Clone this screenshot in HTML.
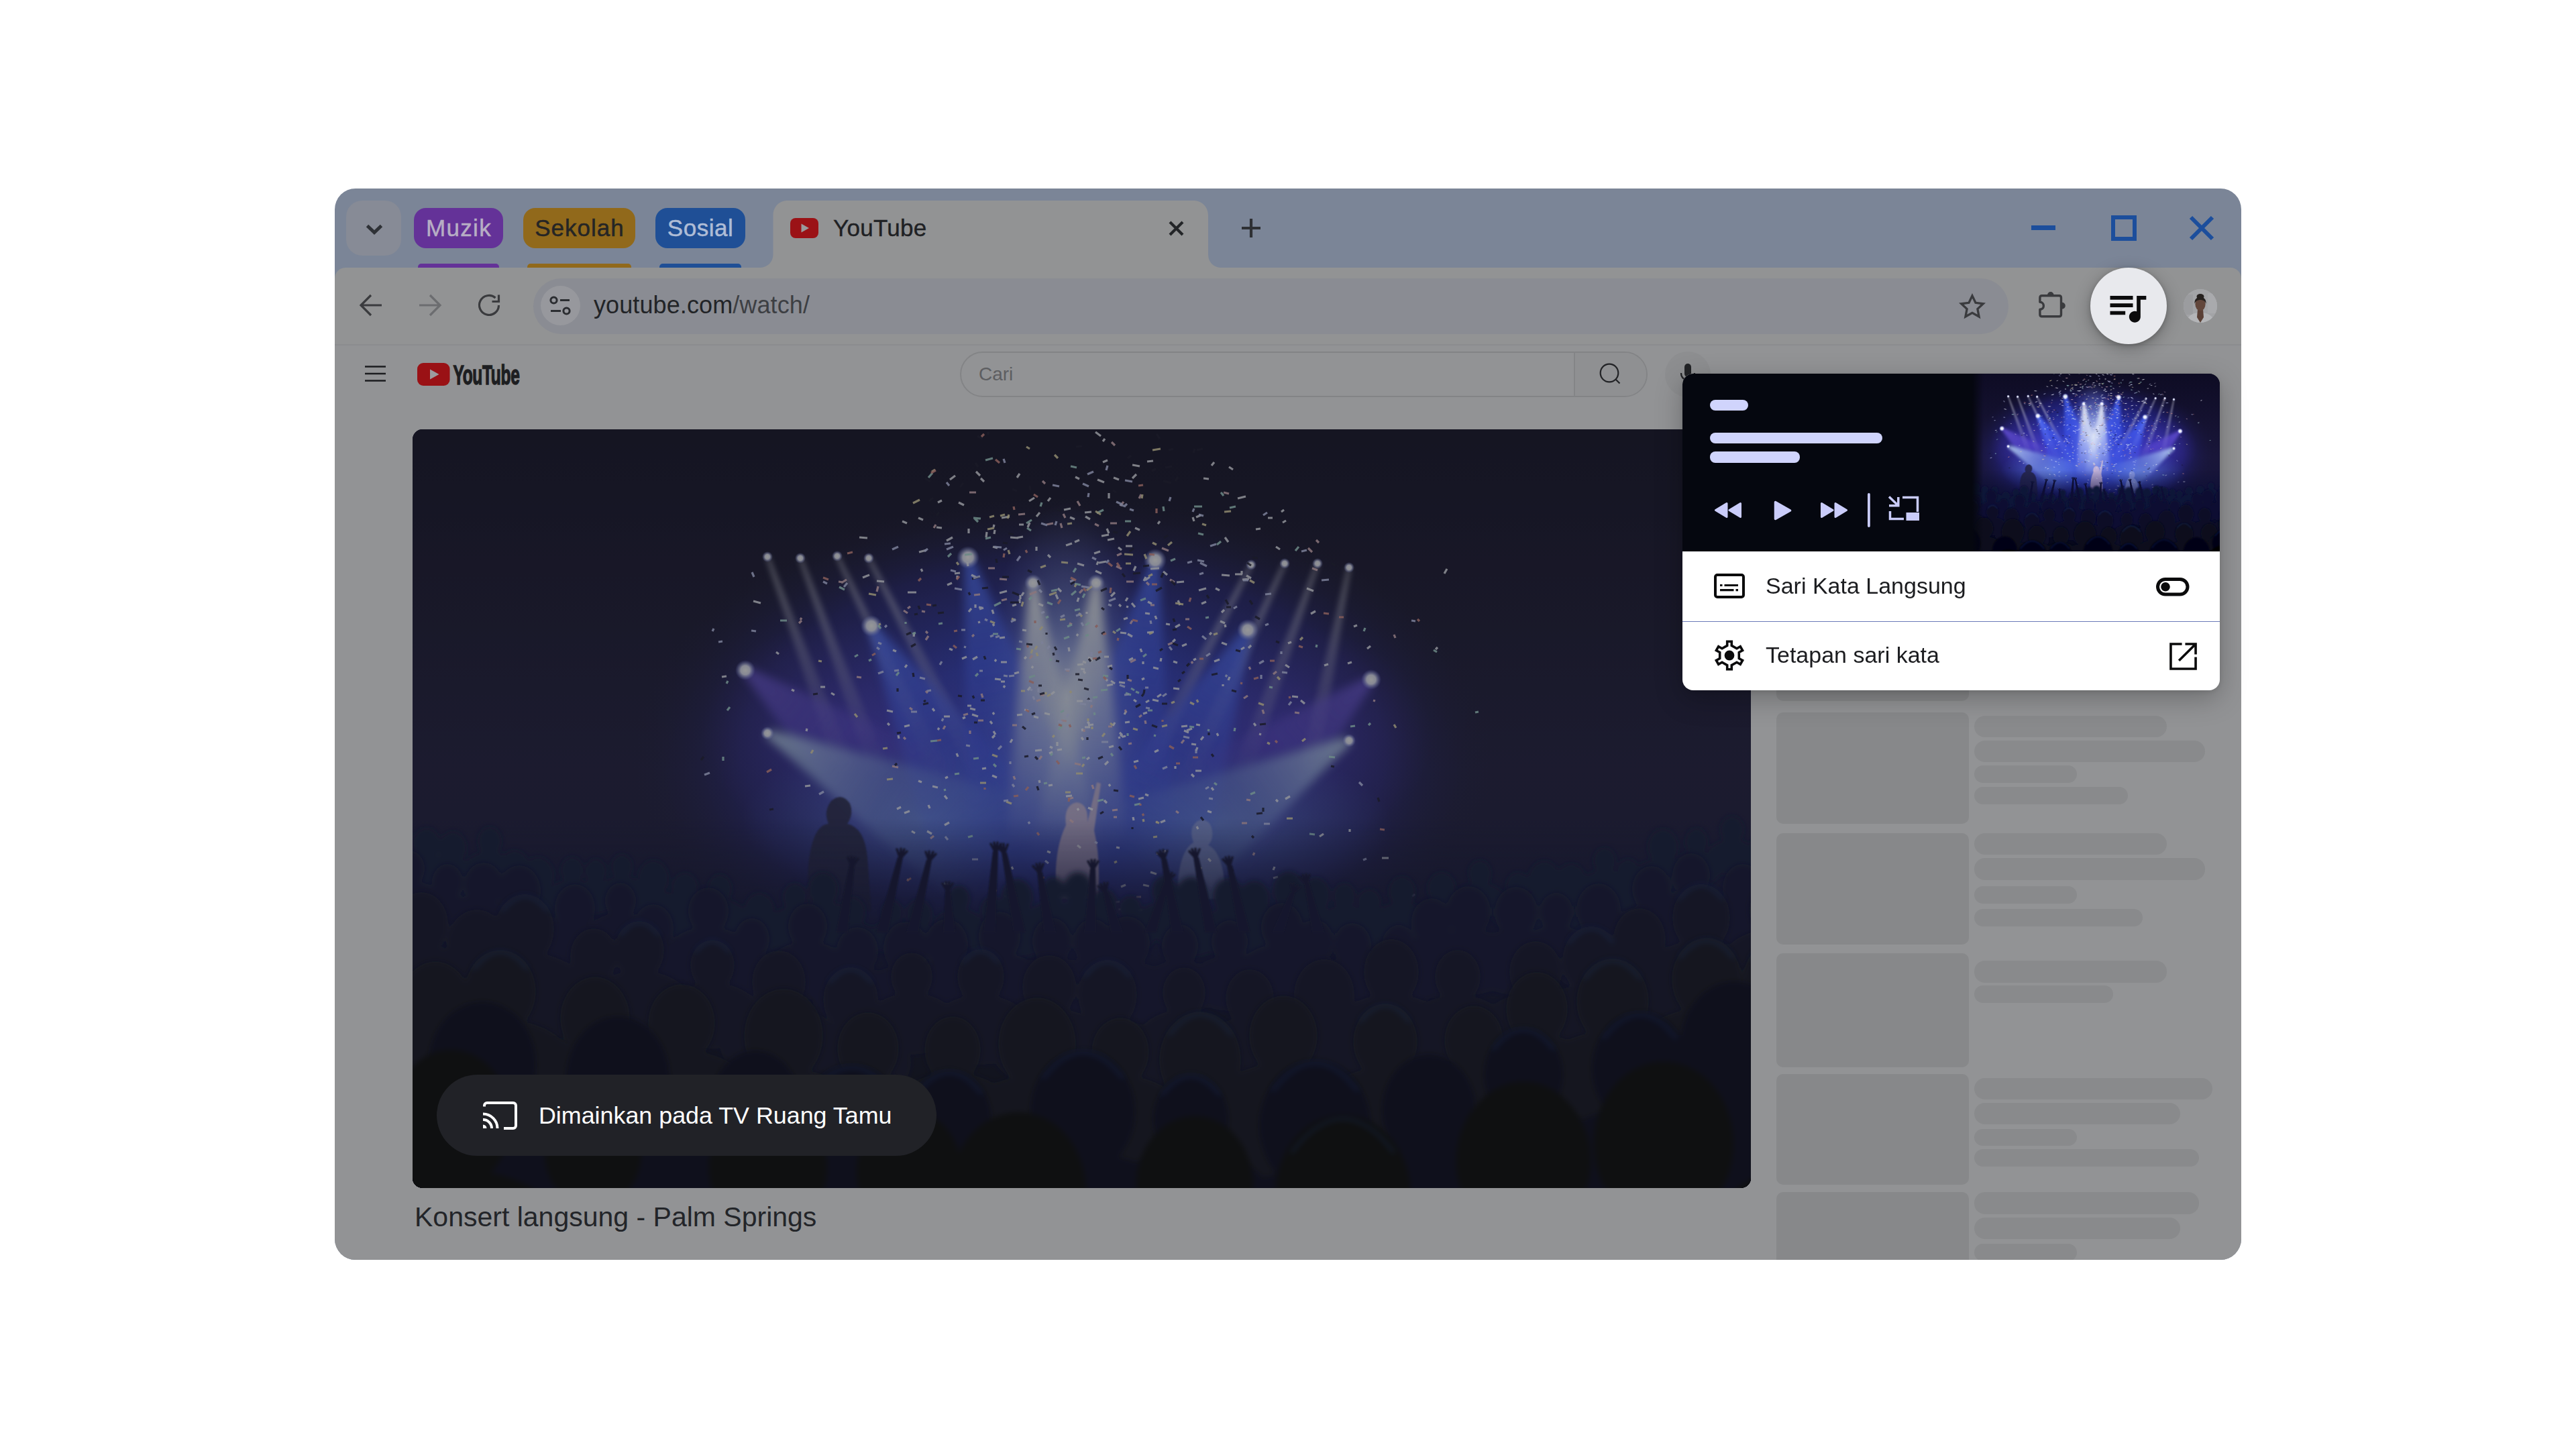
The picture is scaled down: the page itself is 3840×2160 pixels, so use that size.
<!DOCTYPE html>
<html lang="ms"><head><meta charset="utf-8"><title>Sari Kata Langsung</title>
<style>
*{box-sizing:border-box;margin:0;padding:0}
html,body{width:3840px;height:2160px;background:#fff;overflow:hidden}
body{position:relative;font-family:"Liberation Sans",sans-serif;color:#1f2023}
.abs{position:absolute}
#win{position:absolute;left:499px;top:281px;width:2842px;height:1597px;border-radius:31px;background:#7b8597;overflow:hidden}
#toolbar{position:absolute;left:0;top:118px;width:2842px;height:114px;background:#929394;border-radius:16px 16px 0 0}
#tbline{position:absolute;left:0;top:231.500px;width:2842px;height:2.500px;background:#8b8c8e}
#page{position:absolute;left:0;top:234px;width:2842px;height:1363px;background:#929395}
#tabbtn{position:absolute;left:17px;top:18px;width:82px;height:82px;border-radius:24px;background:#878b96}
.chip{position:absolute;top:29px;height:60px;border-radius:18px;font-size:35px;line-height:60px;text-align:center;-webkit-text-stroke:.5px currentColor;letter-spacing:.2px}
.ul{position:absolute;top:112px;height:8px;border-radius:5px 5px 0 0}
#tab{position:absolute;left:632px;top:18px;width:690px;height:100px}
#tabtitle{position:absolute;left:743px;top:38px;font-size:35px;line-height:42px;color:#1f2124;-webkit-text-stroke:.4px #1f2124;letter-spacing:.3px}
#omni{position:absolute;left:296px;top:134px;width:2199px;height:83px;border-radius:42px;background:#8a8c93}
#site{position:absolute;left:307px;top:145px;width:59px;height:59px;border-radius:50%;background:#97989d}
#url{position:absolute;left:386px;top:152px;font-size:36px;line-height:44px;color:#3d3f43;letter-spacing:.1px}
#url b{font-weight:normal;color:#222427}
#media{position:absolute;left:3116px;top:399px;width:114px;height:114px;border-radius:50%;background:#e8e9ed;box-shadow:0 6px 24px rgba(0,0,0,.28),0 2px 6px rgba(0,0,0,.18)}
#avatar{position:absolute;left:2756px;top:150px;width:50px;height:50px;border-radius:50%;overflow:hidden;background:#a9aaad}
#search{position:absolute;left:932px;top:243px;width:1025px;height:68px;border-radius:34px;border:2px solid #838486;background:#929395;overflow:hidden}
#search .btn{position:absolute;right:0;top:0;width:108px;height:64px;background:#8f9092;border-left:2px solid #848587}
#search span{position:absolute;left:26px;top:15px;font-size:28px;line-height:34px;color:#5d5e61}
#mic{position:absolute;left:1983px;top:243px;width:68px;height:68px;border-radius:50%;background:#8d8e90}
#video{position:absolute;left:116px;top:359px;width:1995px;height:1131px;border-radius:15px;overflow:hidden;background:#12122a}
#cast{position:absolute;left:152px;top:1321px;width:745px;height:121px;border-radius:61px;background:#212227}
#cast span{position:absolute;left:152px;top:39px;font-size:35.850px;line-height:44px;color:#fff;white-space:nowrap}
#vtitle{position:absolute;left:119px;top:1508px;font-size:41px;line-height:50px;color:#232529;white-space:nowrap}
.sk{position:absolute;background:#87888a;border-radius:10px}
.sb{position:absolute;background:#898a8c;border-radius:16px;left:2444px}
#pop{position:absolute;left:2508px;top:557px;width:801px;height:472px;border-radius:16px;background:#fff;overflow:hidden;box-shadow:0 12px 40px rgba(0,0,0,.26),0 2px 8px rgba(0,0,0,.1)}
#pdark{position:absolute;left:0;top:0;width:801px;height:265px;background:#05070f;overflow:hidden}
.pb{position:absolute;left:41px;height:16px;border-radius:8px;background:#d0d4fc}
.row{position:absolute;left:124px;font-size:34px;line-height:42px;color:#1b1c1f;white-space:nowrap}
#pdiv{position:absolute;left:0;top:369px;width:801px;height:1.300px;background:#6b7ab8}
svg{position:absolute;overflow:visible}
</style></head><body>
<svg width="0" height="0" style="left:0;top:0"><symbol id="concert" viewBox="0 0 1995 1131" preserveAspectRatio="none">
<defs>
<linearGradient id="cbg" x1="0" y1="0" x2="0" y2="1"><stop offset="0" stop-color="#0c0a20"/><stop offset=".45" stop-color="#19163a"/><stop offset=".75" stop-color="#13133a"/><stop offset="1" stop-color="#020308"/></linearGradient>
<radialGradient id="cg1" cx=".5" cy=".5" r=".5"><stop offset="0" stop-color="#4659e6" stop-opacity=".95"/><stop offset=".4" stop-color="#3040d2" stop-opacity=".85"/><stop offset=".75" stop-color="#2a2aa6" stop-opacity=".45"/><stop offset="1" stop-color="#1a1840" stop-opacity="0"/></radialGradient>
<radialGradient id="cg2" cx=".5" cy=".5" r=".5"><stop offset="0" stop-color="#f0f6fb" stop-opacity=".85"/><stop offset=".45" stop-color="#a8bcf0" stop-opacity=".45"/><stop offset="1" stop-color="#6a7cdc" stop-opacity="0"/></radialGradient>
<radialGradient id="cg3" cx=".5" cy=".5" r=".5"><stop offset="0" stop-color="#4a38c0" stop-opacity=".75"/><stop offset="1" stop-color="#3a2a90" stop-opacity="0"/></radialGradient>
<radialGradient id="cg4" cx=".5" cy=".5" r=".5"><stop offset="0" stop-color="#7aa2f0" stop-opacity=".5"/><stop offset="1" stop-color="#5a80e0" stop-opacity="0"/></radialGradient>
<linearGradient id="bW" x1="0" y1="0" x2="0" y2="1"><stop offset="0" stop-color="#e6e6f2" stop-opacity=".85"/><stop offset="1" stop-color="#c9c9e0" stop-opacity="0"/></linearGradient>
<linearGradient id="bB" x1="0" y1="0" x2="0" y2="1"><stop offset="0" stop-color="#4a6aff" stop-opacity=".9"/><stop offset="1" stop-color="#3a4cf0" stop-opacity="0"/></linearGradient>
<linearGradient id="bP" x1="0" y1="0" x2="0" y2="1"><stop offset="0" stop-color="#7058e8" stop-opacity=".75"/><stop offset="1" stop-color="#5040c8" stop-opacity="0"/></linearGradient>
<linearGradient id="bC" x1="0" y1="0" x2="0" y2="1"><stop offset="0" stop-color="#c4e0fa" stop-opacity=".85"/><stop offset=".5" stop-color="#86aef0" stop-opacity=".35"/><stop offset="1" stop-color="#86aef0" stop-opacity="0"/></linearGradient>
<linearGradient id="bWW" x1="0" y1="0" x2="0" y2="1"><stop offset="0" stop-color="#fafdff" stop-opacity=".95"/><stop offset="1" stop-color="#c8d6f4" stop-opacity="0"/></linearGradient>
<radialGradient id="sp"><stop offset="0" stop-color="#fff"/><stop offset=".45" stop-color="#eef0ff" stop-opacity=".95"/><stop offset="1" stop-color="#8f9cff" stop-opacity="0"/></radialGradient>
<linearGradient id="cdk" x1="0" y1="0" x2="0" y2="1"><stop offset="0" stop-color="#0c0f36" stop-opacity="0"/><stop offset=".3" stop-color="#0b0e32" stop-opacity=".82"/><stop offset=".6" stop-color="#080a22" stop-opacity=".96"/><stop offset="1" stop-color="#020308"/></linearGradient>
<filter id="bl6" x="-50%" y="-50%" width="200%" height="200%"><feGaussianBlur stdDeviation="7"/></filter>
<filter id="bl3" x="-50%" y="-50%" width="200%" height="200%"><feGaussianBlur stdDeviation="4"/></filter>
<filter id="bl1" x="-50%" y="-50%" width="200%" height="200%"><feGaussianBlur stdDeviation="1.2"/></filter>
</defs>
<rect width="1995" height="1131" fill="url(#cbg)"/>
<ellipse cx="968" cy="485" rx="640" ry="385" fill="url(#cg1)"/>
<ellipse cx="660" cy="450" rx="230" ry="170" fill="url(#cg3)"/>
<ellipse cx="1290" cy="460" rx="230" ry="170" fill="url(#cg3)"/>
<ellipse cx="760" cy="580" rx="270" ry="120" fill="url(#cg4)"/>
<ellipse cx="1200" cy="590" rx="260" ry="115" fill="url(#cg4)"/>
<ellipse cx="975" cy="400" rx="125" ry="290" fill="url(#cg2)"/>
<g filter="url(#bl3)">
<polygon transform="translate(529,190) rotate(-20.1)" points="-2.5,0 2.5,0 15,351 -15,351" fill="url(#bW)" opacity="0.62"/>
<polygon transform="translate(578,192) rotate(-20.3)" points="-2.5,0 2.5,0 15,352 -15,352" fill="url(#bW)" opacity="0.62"/>
<polygon transform="translate(633,189) rotate(-25.4)" points="-2.5,0 2.5,0 15,365 -15,365" fill="url(#bW)" opacity="0.62"/>
<polygon transform="translate(680,192) rotate(-27.3)" points="-2.5,0 2.5,0 15,371 -15,371" fill="url(#bW)" opacity="0.62"/>
<polygon transform="translate(1250,202) rotate(27.3)" points="-2.5,0 2.5,0 15,371 -15,371" fill="url(#bW)" opacity="0.62"/>
<polygon transform="translate(1300,200) rotate(24.4)" points="-2.5,0 2.5,0 15,362 -15,362" fill="url(#bW)" opacity="0.62"/>
<polygon transform="translate(1349,200) rotate(19.8)" points="-2.5,0 2.5,0 15,351 -15,351" fill="url(#bW)" opacity="0.62"/>
<polygon transform="translate(1396,206) rotate(11.3)" points="-2.5,0 2.5,0 15,337 -15,337" fill="url(#bW)" opacity="0.62"/>
</g>
<g filter="url(#bl6)">
<polygon transform="translate(828,191) rotate(-12.7)" points="-6,0 6,0 95,419 -95,419" fill="url(#bB)" opacity="1"/>
<polygon transform="translate(1107,195) rotate(9.4)" points="-6,0 6,0 95,411 -95,411" fill="url(#bB)" opacity="1"/>
<polygon transform="translate(684,293) rotate(-29.5)" points="-6,0 6,0 105,399 -105,399" fill="url(#bB)" opacity="1"/>
<polygon transform="translate(1245,299) rotate(25.8)" points="-6,0 6,0 105,379 -105,379" fill="url(#bB)" opacity="1"/>
<polygon transform="translate(496,359) rotate(-50.9)" points="-6,0 6,0 100,366 -100,366" fill="url(#bP)" opacity="1"/>
<polygon transform="translate(1429,373) rotate(48.8)" points="-6,0 6,0 100,344 -100,344" fill="url(#bP)" opacity="1"/>
<polygon transform="translate(529,453) rotate(-62.0)" points="-5,0 5,0 100,398 -100,398" fill="url(#bC)" opacity="1"/>
<polygon transform="translate(1396,464) rotate(59.5)" points="-5,0 5,0 100,367 -100,367" fill="url(#bC)" opacity="1"/>
<polygon transform="translate(925,229) rotate(-4.4)" points="-6,0 6,0 70,392 -70,392" fill="url(#bWW)" opacity="1"/>
<polygon transform="translate(1019,229) rotate(3.5)" points="-6,0 6,0 70,392 -70,392" fill="url(#bWW)" opacity="1"/>
</g>
<circle cx="529" cy="190" r="8" fill="url(#sp)"/>
<circle cx="578" cy="192" r="8" fill="url(#sp)"/>
<circle cx="633" cy="189" r="8" fill="url(#sp)"/>
<circle cx="680" cy="192" r="8" fill="url(#sp)"/>
<circle cx="1250" cy="202" r="8" fill="url(#sp)"/>
<circle cx="1300" cy="200" r="8" fill="url(#sp)"/>
<circle cx="1349" cy="200" r="8" fill="url(#sp)"/>
<circle cx="1396" cy="206" r="8" fill="url(#sp)"/>
<circle cx="828" cy="191" r="17" fill="url(#sp)"/>
<circle cx="1107" cy="195" r="17" fill="url(#sp)"/>
<circle cx="925" cy="229" r="13" fill="url(#sp)"/>
<circle cx="1019" cy="229" r="13" fill="url(#sp)"/>
<circle cx="684" cy="293" r="16" fill="url(#sp)"/>
<circle cx="1245" cy="299" r="16" fill="url(#sp)"/>
<circle cx="496" cy="359" r="15" fill="url(#sp)"/>
<circle cx="1429" cy="373" r="15" fill="url(#sp)"/>
<circle cx="529" cy="453" r="10" fill="url(#sp)"/>
<circle cx="1396" cy="464" r="10" fill="url(#sp)"/>
<g filter="url(#bl1)">
<path d="M590 650 q6-60 30-62 q-8-18 4-34 q16-14 28 4 q6 16-4 30 q26 6 30 50 l6 80 h-96z" fill="#222248" opacity=".9"/>
<path d="M960 700 q-6-70 14-110 q-4-30 16-34 q18 2 16 30 l14-60 6 2-10 70 q10 40 6 102z" fill="#e0c4d4" opacity=".7"/>
<path d="M1140 700 q0-70 24-84 q-8-22 6-32 q18-6 22 14 q2 14-6 22 q24 10 26 80z" fill="#9aa6e0" opacity=".65"/>
</g>
<path d="M1085 327l2 5M1066 281l-6 2M867 142l-1 4M826 339l-7 3M766 180l-11 3M1107 278l2 5M1053 377l9 1M905 66l-4 6M831 416l8 2M1134 346l6 2M1123 290l6 1M909 299l6 1M1217 56l6 4M1036 46l-7 3M1038 529l2 3M1197 237l6 3M1022 197l-2 5M983 546l-9 1M1168 440l6 1M1099 220l-7 5M801 428l-9 0M993 251l-2 6M1134 386l9 1M1155 442l-9 1M1285 652l-2 5M855 505l-6 1M844 265l5 1M1055 455l5 4M865 290l2 3M1211 291l1 4M1007 340l6 2M692 226l11 1M1032 14l-3 4M991 620l5 4M934 523l1 4M1113 207l-13 1M615 384l-7 0M1054 714l0 3M1358 603l-6 4M891 161l12 1M1088 717l-7 0M1033 372l3 3M775 416l3 4M1179 458l-4 5M883 382l-2 3M1015 440l-8 1M1250 322l-4 4M1123 628l-5 3M1183 257l-7 3M1012 123l-10 1M1037 495l-5 5M883 376l-6 0M1055 303l9 1M909 425l-8 1M1264 148l-7 1M468 368l-7 1M1018 211l9 4M754 524l5 2M1053 261l3 3M842 339l-7 4M754 132l7 3M1047 437l-3 5M1191 303l-3 3M1111 631l-1 3M785 445l-2 3M1204 286l7 3M1254 438l3 4M1116 395l-6 4M666 161l12 1M1045 72l8 3M1072 259l5 6M1021 75l10 4M904 142l7 0M829 148l-0 7M868 372l9 1M1052 176l5 4M988 71l6 3M833 267l-4 5M833 217l8 4M741 569l-8 3M1096 257l6 3M1053 458l1 3M1089 679l9 2M1144 291l-7 4M767 599l7 4M866 450l3 5M1112 478l-6 3M565 388l4 2M870 343l-2 3M1195 49l-4 5M1038 95l0 8M708 438l3 3M851 266l-6 2M744 599l5 3M877 347l9 0M890 130l-12 2M1025 182l-9 3M1528 325l-3 3M1098 404l-5 3M588 446l-1 4M1161 469l7 1M748 303l-1 6M893 652l2 4M1074 578l1 5M728 563l-6 3M1066 263l-1 3M1104 47l-9 1M915 339l-3 3M1150 227l-11 1M1310 317l-5 2M983 170l-9 3M811 483l2 5M716 329l5 2M1038 339l-7 0M1161 514l4 4M999 346l5 2M1066 251l-3 5M920 139l-3 7M926 428l7 2M1095 422l-6 2M1324 404l6 5M864 269l2 6M738 243l13 0M1041 375l6 4M1078 204l-3 7M1208 380l-0 3M1301 351l6 4M737 351l-3 4M1043 352l-7 2M824 429l-4 2M1141 255l3 7M959 246l3 7M930 175l0 6M1091 371l-4 2M827 198l1 6M1000 350l-9 1M1009 489l-4 3M1175 128l-7 3M1199 453l2 4M1287 552l3 3M1162 446l-8 3M793 546l4 5M1243 218l7 4M1007 564l7 3M847 73l5 5M1186 640l4 4M812 218l-0 5M942 423l8 2M868 456l-4 4M1114 137l-3 4M1299 120l-4 3M1075 403l4 3M1408 292l-5 2M1179 73l8 1M1038 157l-11 2M927 102l-8 5M508 256l11 3M1000 360l3 4M957 391l-5 4M805 161l-9 5M950 473l4 2M800 327l5 2M905 253l0 6M1287 175l6 4M1365 350l-6 2M804 229l-7 3M1236 211l0 5M1092 274l7 1M1542 208l-4 7M1137 313l-4 4M900 261l-6 2M839 261l0 5M906 247l-0 6M1034 197l-11 2M1082 494l-7 2M681 217l-10 4M978 325l1 6M868 150l-1 6M1006 436l3 3M1163 131l2 6M739 670l-1 3M769 560l2 5M542 332l4 3M1090 549l-8 2M1104 355l8 2M840 63l6 6M954 530l-6 1M1049 623l5 1M792 677l8 2M593 531l-8 1M998 446l1 4M1018 4l8 6M886 241l-11 3M961 466l0 6M1177 654l-6 0M1445 639l10 0M991 200l10 3M1154 320l-7 3M844 286l1 3M1150 449l7 3M980 131l7 3M834 425l9 3M991 565l2 3M1308 547l-7 4M935 124l-5 6M814 109l8 4M1203 343l-8 3M1191 534l3 4M865 422l2 3M933 260l7 3M951 102l-4 5M1074 341l-6 3M758 208l2 4M1046 163l-10 2M1079 67l-6 6M1100 660l9 3M910 160l-11 2M1311 398l9 1M1031 553l4 4M707 419l9 2M781 146l8 1M962 237l5 5M994 165l-7 3M1137 502l-0 4M882 696l8 1M947 187l4 4M1005 272l0 3M1045 472l-7 2M1069 436l-7 1M624 393l5 3M1211 161l5 7M1093 220l-3 6M1185 569l6 2M938 478l-10 1M1061 456l1 3M833 412l-6 0M968 477l-7 1M816 214l-8 1M1077 147l7 3M992 305l-2 3M1218 369l-2 5M864 516l7 3M1302 136l-5 3M1428 323l-5 4M921 384l-4 5M925 353l-2 3M883 310l-8 1M1066 305l7 4M990 405l9 0M1333 237l10 4M789 106l-6 3M1400 347l-6 2M1176 509l-9 0M997 459l3 4M1003 130l7 4M1073 53l11 2M856 153l-1 8M1282 132l-7 0M1002 444l8 0M946 629l5 2M724 456l1 5M1063 679l-7 3M730 137l7 3M1210 269l-4 4M775 532l8 2M954 481l-5 2M1047 243l-6 6M1089 346l0 4M1397 596l-0 4M1240 325l-5 3M1064 420l-3 5M1012 343l1 3M1237 216l-11 0M1073 174l-10 0M1206 318l8 3M1103 403l9 2M1170 474l-2 5M1242 100l-12 3M1206 217l12 1M1035 148l3 7M798 518l-4 2M809 69l-8 6M1105 302l-10 1M996 357l6 1M1122 583l-7 3M1264 453l-1 3M911 243l-3 5M1119 212l6 5M1290 667l-7 2M926 226l2 6M1168 342l-4 2M1116 341l-1 5M1169 592l2 4M1183 237l-11 3M861 435l3 4M741 441l-8 2M1346 271l-7 4M800 586l-7 4M912 418l6 1M981 118l-10 2M1054 452l4 4M1247 223l-10 1M865 175l7 2M1092 544l5 2M904 362l-7 2M1044 380l-9 2M894 462l-3 5" stroke="#f4f6ff" stroke-width="3.2" fill="none" opacity=".85"/>
<path d="M1051 567l-8 1M858 207l10 0M1209 94l8 2M1244 587l-8 0M987 498l9 2M765 390l3 3M777 606l-5 4M846 246l-9 1M979 289l4 2M765 301l3 3M851 434l-8 0M1001 447l-0 4M980 582l5 4M985 549l-8 2M999 239l-5 5M936 396l6 0M1106 262l-6 0M1072 468l-5 1M1042 19l5 5M1255 631l-2 4M1463 306l2 5M1057 185l-7 3M1062 418l2 4M780 142l-3 5M1129 224l7 4M1075 227l-11 0M1050 140l-10 0M1045 578l5 0M1335 177l6 6M580 281l-2 3M647 224l-8 5M715 502l9 2M1161 346l2 3M1060 108l-5 6M1152 283l6 0M886 253l-8 2M875 223l11 1M1117 177l10 4M828 424l-7 2M1347 165l4 4M1066 373l6 2M1341 207l8 3M970 126l3 6M742 264l-4 3M769 308l-4 6M840 94l-10 0M967 434l8 1M955 140l-10 2M732 270l6 4M966 140l2 7M1013 530l2 6M864 686l7 2M1109 584l1 3M936 403l-6 2M1092 434l1 5M1243 552l6 1M1133 318l-7 3M901 441l-7 0M1087 426l-4 3M930 242l-10 4M732 459l3 3M1073 285l-3 5M1247 354l2 4M848 394l2 6M794 442l-3 5M938 487l-4 5M831 449l0 5M896 517l2 5M1078 343l-8 4M1288 361l-5 4M924 337l-4 5M1086 97l-3 6M1267 418l2 6M1245 397l-6 4M991 107l4 7M1094 228l4 4M580 285l-4 4M1049 204l8 4M939 77l4 4M1434 403l-1 3M1315 422l7 1M694 234l-2 8M974 359l5 1M662 369l7 1M1013 411l-2 4M1138 569l4 3M1037 443l6 0M635 227l7 1M837 306l-3 3M1086 697l-7 0M741 415l4 3M759 271l5 1M1150 463l-4 5M1017 141l6 3M913 126l-10 1" stroke="#eac0c8" stroke-width="3.2" fill="none" opacity=".85"/>
<path d="M951 342l-0 3M954 483l-3 3M1003 489l-5 1M1078 391l5 2M928 367l-9 3M969 442l-6 5M1085 558l-9 2M735 287l-0 3M1008 306l-5 2M1366 488l9 1M1348 321l-1 4M1093 252l-8 3M916 147l6 4M983 291l-7 3M1063 393l8 3M1055 297l-6 4M1321 175l-5 6M473 414l-4 5M946 527l-5 1M1036 388l-10 1M803 185l-5 5M1158 443l7 1M1137 193l-7 3M995 268l-8 2M775 65l-6 7M750 303l-5 2M790 289l-6 1M1071 386l5 3M877 258l-10 5M1226 445l-1 5M1256 541l-7 3M862 161l-8 2M636 235l8 4M782 464l-10 1M989 207l-4 6M1062 137l9 0M1030 552l-9 2M938 109l-2 6M837 132l6 6M1428 438l-3 3M1029 367l8 1M1165 115l12 0M1107 455l-1 3M1405 442l-7 1M987 230l9 2M865 43l-11 3M1205 94l4 5M835 606l-7 2M834 186l-11 1M1171 155l8 2M836 132l11 1M923 250l-4 4M843 364l-4 4M946 258l8 3M1195 527l4 3M923 135l-8 5M1030 120l-10 5M694 292l4 5M1187 280l-5 1M981 55l9 2M1009 288l-6 4M1205 167l-6 5M1021 399l-7 1M1002 245l-3 6M1119 115l1 7M1187 447l-1 3M548 285l10 0M1096 419l7 0M1016 422l1 4M1227 115l-9 2M948 279l-4 2M971 419l-5 3M979 309l-8 3M725 362l-4 5M1420 296l-2 5M1094 335l-5 4M989 241l-7 6M1041 483l3 4M900 327l7 1M865 305l8 0M1522 329l5 3M684 343l-4 2M793 536l1 3M866 499l4 4M1277 384l5 1M664 336l-5 3M1589 421l-5 1M470 375l-2 4M961 239l-9 2M1337 603l8 1M1066 453l-0 4M463 488l0 6M815 513l-7 1M844 490l-8 1" stroke="#b0e4dc" stroke-width="3.2" fill="none" opacity=".85"/>
<path d="M945 392l-2 3M1136 406l-5 2M1089 581l1 4M939 294l-4 5M1132 168l-6 5M1061 186l13 1M1040 438l4 3M957 38l5 5M1044 301l4 3M960 243l-11 4M1115 29l-12 2M967 198l10 1M944 203l-8 3M1177 141l6 2M1463 440l3 5M1103 216l-6 3M867 147l-10 2M1070 152l-5 7M1159 407l6 3M983 140l-7 1M779 60l-5 3M659 424l4 5M1331 461l-5 4M696 289l1 3M708 475l-7 1M888 180l2 6M1013 234l-8 6M756 105l-10 5M716 521l-9 1M855 527l-9 0M1110 607l-6 1M1274 467l4 2M980 390l2 3M1001 499l-3 4M957 456l-3 3M1248 225l7 4M1007 431l-0 4M1200 304l-6 2M1303 580l9 0M1074 446l7 2M1169 403l2 4M861 286l7 3M993 274l5 5M1220 122l-10 1M913 390l-6 0M885 555l8 3M981 541l-8 0M973 283l-8 1M889 127l-2 6M930 333l2 5M597 478l-3 5M989 231l-2 4M1103 303l-5 2M811 198l3 4M1289 369l4 4M989 513l10 0M1088 97l-1 6M867 129l-7 2M1327 310l-4 4M1091 186l3 7M1103 169l6 3M1261 408l8 3M910 257l-2 7M951 395l-5 3M915 26l5 3M931 323l-3 5M1108 585l5 2M605 345l5 1M1063 200l8 0M893 282l6 3M1137 259l12 2M680 245l11 2M924 328l-2 6M1018 122l8 5M864 485l8 3M1050 644l-4 2M1032 453l-4 5M883 127l-7 2M1013 443l-0 4M1125 441l-8 2" stroke="#f0e4b0" stroke-width="3.2" fill="none" opacity=".85"/>
<path d="M604 394l-7 1M1272 439l-9 1M1212 254l4 7M891 258l13 0M723 386l-0 5M746 363l1 6M959 345l5 1M853 404l-6 0M1132 55l-10 2M1141 71l-4 6M1151 361l-4 3M1248 255l4 6M1158 349l-4 4M1268 564l-0 6M987 227l-6 4M1001 386l7 2M888 155l8 2M1008 342l3 4M1200 364l-9 2M961 119l5 3M992 373l7 1M852 338l2 5M1256 279l7 4M1133 319l8 3M1044 91l5 3M1090 394l-3 4M1027 266l4 3M1178 29l-9 2M933 382l5 0M880 169l7 1M1073 593l0 3M942 393l-7 2M1102 441l8 3M957 324l3 5M932 225l3 7M728 452l-6 1M781 262l-6 1M858 236l-9 1M1006 459l0 4M1223 656l-3 5M1075 177l-6 5M842 437l-5 0M753 275l-5 1M909 443l5 4M776 102l-6 5M1025 340l-7 4M928 488l4 4M1369 502l5 1M918 487l-6 1M845 220l-11 3M894 89l7 3M1035 237l-9 4M1009 401l-3 3M917 210l6 3M894 243l10 4M1126 158l-6 4M785 124l-4 4M1119 77l12 3M1032 302l-5 3M1117 409l8 0M1439 549l2 6M1108 59l-6 3M1117 236l-9 5M1287 316l5 2M1175 578l4 5M1039 355l4 3M1091 388l-1 6M1131 226l6 6M1030 570l-5 3M920 84l1 7M928 423l-5 2M955 333l1 4M743 303l-7 3M858 4l0 4M1213 265l7 0M1045 538l7 1M1244 199l6 4M945 303l-0 3M1191 484l3 4M1071 39l-5 4M813 397l6 1M750 320l-7 4M1267 572l-9 1M1145 373l-4 3M792 273l-9 1M839 50l4 6M1166 29l-2 6M722 498l-3 3M931 532l2 6M1109 7l5 7M1171 663l-1 5M1134 29l-7 2M1221 389l7 2M842 10l8 4M1029 488l-7 3M829 243l2 4M1058 215l4 5M1098 203l-9 1M434 488l-4 5M891 713l6 0M1134 282l2 5M821 80l-5 6M1066 366l0 6M1139 298l-6 1M1227 329l7 2M1252 191l8 1M998 25l-9 1M1184 247l3 5M870 193l1 6M769 408l-8 2M538 566l-6 1M879 220l10 0M988 365l6 0M764 73l8 5M1118 327l-4 3M765 404l-3 2M1085 410l-7 4M1370 199l5 4M1187 452l-0 4M1251 606l3 3M1085 214l-11 1M1044 153l7 1M754 263l2 5M1053 473l4 5M1119 214l-3 7M915 320l9 1M835 397l2 4" stroke="#15142a" stroke-width="3.2" fill="none" opacity=".85"/>
<path d="M1310 406l-4 5M866 307l-5 2M1054 381l8 3M506 213l3 7M725 359l-7 1M1036 54l-2 7M995 409l9 1M648 229l-5 6M1168 477l-0 6M834 641l9 0M845 360l5 0M997 288l3 5M942 272l-5 2M938 316l1 4M773 389l-6 1M1100 285l1 5M1280 245l-9 1M894 529l3 4M1295 331l0 4M1296 362l8 1M1278 588l-9 0M462 316l-6 1M1005 404l8 1M1189 334l-6 4M960 137l-2 6M1037 261l5 2M999 81l9 4M824 323l-1 3M1130 101l-2 6M1017 615l4 2M980 358l-8 0M1048 252l-10 4M1170 195l10 2M1062 76l11 2M1165 118l-2 5M1149 458l9 2M1489 285l6 1M1069 119l6 2M978 424l-3 5M987 224l-7 3M756 370l8 2M768 178l-5 4M443 512l-8 3M1366 224l-11 1M962 435l7 1M824 299l-6 0M1015 63l-9 4M449 297l-2 4M1411 526l5 5M1265 366l0 6M1125 503l-7 3M920 387l4 2M1187 550l6 1M613 540l-7 4M724 175l-9 4M997 275l-8 3M878 472l-5 5M692 325l4 3M802 210l8 2M1494 693l-4 3M897 367l-8 1M918 585l2 3M933 386l-0 6M875 308l-6 2M934 239l4 4M1269 345l-7 4M796 79l4 5M881 44l2 6M1111 692l4 5M1174 199l10 5M612 227l6 3M702 361l-8 3M1093 415l6 1M1008 95l-1 6M950 323l-4 4M1013 191l6 3M752 421l-9 0M974 444l3 3M943 643l5 4M802 170l-9 1M1214 366l-2 3M1162 197l-7 2M505 300l7 1M1068 395l-7 1M1172 127l7 2M881 367l6 1M1037 466l-10 0M906 189l-5 7M806 175l-10 4M1422 640l-5 2M1274 124l-6 4M1038 195l-4 4M1246 225l-8 0M937 140l9 3M1054 112l9 3M1198 171l-9 3M886 177l-5 3M846 219l-10 3M1187 533l-5 3M1065 111l-4 4M791 431l-2 4M1128 324l4 5M904 316l5 1M853 283l4 2M1229 264l-5 3M694 318l5 2M997 234l12 2M899 283l-7 4M808 237l11 2M789 346l-3 5M1054 704l-6 1M1179 214l-6 2M825 471l6 1M707 292l-3 3M1333 180l-8 2M1177 308l6 5M867 175l11 1M1124 394l-6 4M1097 385l-5 0M925 398l2 5M972 277l-6 3M794 607l4 5M888 553l-7 1M954 83l10 2M1049 108l9 4M1276 290l-5 2M1012 332l-0 6M891 495l0 4" stroke="#cdd4ff" stroke-width="3.2" fill="none" opacity=".85"/>
<path d="M960 494l4 5M1163 489l8 0M853 534l-0 3M1307 398l1 3M1109 118l-0 7M1128 472l7 4M1069 546l7 2M806 322l5 4M979 440l2 4M1498 283l3 3M1052 311l-1 4M926 97l6 4M928 285l-0 4M1085 558l0 3M815 219l-4 5M1102 231l8 0M931 601l3 4M1442 596l7 1M966 254l-4 6M1173 342l6 0M1021 292l-3 3M535 507l-7 4M1261 370l-7 2M1160 251l-2 6M896 115l1 5M1073 284l8 2M1020 341l-6 1M812 300l-5 1M963 440l5 2M1041 236l-1 8M882 185l-1 6M612 221l8 3M903 546l-7 1M1358 274l8 1M1030 369l4 4M869 45l6 5M1050 199l4 6M979 549l-1 6M690 334l-5 3M1236 377l-1 3M919 375l7 3M1027 331l-5 2M743 669l-6 4M766 261l7 1M788 463l-6 1M1118 433l-0 3M1285 345l-7 0M981 221l8 4M1089 83l-7 1M1286 464l3 3M1138 498l6 0M1000 237l4 4M1037 199l6 5M780 61l-7 4M1388 280l-7 0M914 180l2 4M1034 304l-5 2M1098 186l8 1M1088 573l2 3M852 7l-4 4M1321 323l6 2M1155 294l6 4M916 322l2 3M914 418l5 3M1076 501l3 5M758 222l-4 4M656 183l-8 2M942 668l-5 1M918 533l-4 5" stroke="#e09088" stroke-width="3.2" fill="none" opacity=".85"/>
<rect y="580" width="1995" height="551" fill="url(#cdk)"/>
<g fill="#0e1238" filter="url(#bl3)"><ellipse cx="-25" cy="612" rx="23" ry="28"/><ellipse cx="-25" cy="666" rx="51" ry="35"/><ellipse cx="21" cy="618" rx="21" ry="24"/><ellipse cx="21" cy="665" rx="46" ry="31"/><ellipse cx="60" cy="624" rx="21" ry="25"/><ellipse cx="60" cy="672" rx="46" ry="32"/><ellipse cx="115" cy="614" rx="18" ry="22"/><ellipse cx="115" cy="657" rx="41" ry="28"/><ellipse cx="152" cy="652" rx="22" ry="25"/><ellipse cx="152" cy="701" rx="47" ry="32"/><ellipse cx="187" cy="665" rx="24" ry="28"/><ellipse cx="187" cy="720" rx="52" ry="36"/><ellipse cx="238" cy="657" rx="17" ry="20"/><ellipse cx="238" cy="697" rx="38" ry="26"/><ellipse cx="273" cy="659" rx="16" ry="19"/><ellipse cx="273" cy="697" rx="36" ry="25"/><ellipse cx="312" cy="652" rx="16" ry="19"/><ellipse cx="312" cy="690" rx="36" ry="24"/><ellipse cx="359" cy="669" rx="23" ry="27"/><ellipse cx="359" cy="721" rx="50" ry="34"/><ellipse cx="406" cy="685" rx="20" ry="24"/><ellipse cx="406" cy="731" rx="44" ry="30"/><ellipse cx="458" cy="685" rx="18" ry="22"/><ellipse cx="458" cy="727" rx="40" ry="27"/><ellipse cx="517" cy="718" rx="23" ry="27"/><ellipse cx="517" cy="771" rx="50" ry="34"/><ellipse cx="570" cy="697" rx="18" ry="21"/><ellipse cx="570" cy="738" rx="39" ry="27"/><ellipse cx="612" cy="686" rx="22" ry="26"/><ellipse cx="612" cy="737" rx="49" ry="33"/><ellipse cx="656" cy="720" rx="19" ry="23"/><ellipse cx="656" cy="764" rx="42" ry="29"/><ellipse cx="715" cy="720" rx="16" ry="19"/><ellipse cx="715" cy="757" rx="35" ry="24"/><ellipse cx="755" cy="723" rx="20" ry="23"/><ellipse cx="755" cy="768" rx="43" ry="30"/><ellipse cx="814" cy="700" rx="17" ry="20"/><ellipse cx="814" cy="739" rx="36" ry="25"/><ellipse cx="864" cy="717" rx="18" ry="21"/><ellipse cx="864" cy="759" rx="40" ry="27"/><ellipse cx="901" cy="698" rx="24" ry="28"/><ellipse cx="901" cy="752" rx="52" ry="36"/><ellipse cx="955" cy="688" rx="18" ry="21"/><ellipse cx="955" cy="730" rx="40" ry="27"/><ellipse cx="992" cy="686" rx="22" ry="26"/><ellipse cx="992" cy="737" rx="49" ry="34"/><ellipse cx="1031" cy="708" rx="20" ry="23"/><ellipse cx="1031" cy="753" rx="43" ry="29"/><ellipse cx="1070" cy="715" rx="17" ry="20"/><ellipse cx="1070" cy="754" rx="38" ry="26"/><ellipse cx="1121" cy="688" rx="19" ry="23"/><ellipse cx="1121" cy="733" rx="43" ry="29"/><ellipse cx="1161" cy="695" rx="24" ry="28"/><ellipse cx="1161" cy="750" rx="52" ry="36"/><ellipse cx="1216" cy="696" rx="23" ry="27"/><ellipse cx="1216" cy="749" rx="51" ry="35"/><ellipse cx="1255" cy="700" rx="23" ry="27"/><ellipse cx="1255" cy="753" rx="50" ry="34"/><ellipse cx="1306" cy="687" rx="24" ry="28"/><ellipse cx="1306" cy="742" rx="53" ry="36"/><ellipse cx="1346" cy="694" rx="22" ry="26"/><ellipse cx="1346" cy="745" rx="49" ry="33"/><ellipse cx="1389" cy="696" rx="17" ry="20"/><ellipse cx="1389" cy="734" rx="36" ry="25"/><ellipse cx="1426" cy="706" rx="18" ry="21"/><ellipse cx="1426" cy="747" rx="39" ry="27"/><ellipse cx="1475" cy="689" rx="20" ry="23"/><ellipse cx="1475" cy="734" rx="43" ry="29"/><ellipse cx="1534" cy="684" rx="21" ry="24"/><ellipse cx="1534" cy="732" rx="45" ry="31"/><ellipse cx="1591" cy="662" rx="17" ry="20"/><ellipse cx="1591" cy="702" rx="38" ry="26"/><ellipse cx="1648" cy="681" rx="18" ry="21"/><ellipse cx="1648" cy="722" rx="40" ry="27"/><ellipse cx="1687" cy="671" rx="24" ry="28"/><ellipse cx="1687" cy="725" rx="52" ry="35"/><ellipse cx="1727" cy="674" rx="23" ry="27"/><ellipse cx="1727" cy="727" rx="51" ry="35"/><ellipse cx="1777" cy="643" rx="17" ry="20"/><ellipse cx="1777" cy="682" rx="37" ry="25"/><ellipse cx="1812" cy="661" rx="18" ry="21"/><ellipse cx="1812" cy="702" rx="39" ry="27"/><ellipse cx="1864" cy="622" rx="23" ry="27"/><ellipse cx="1864" cy="674" rx="50" ry="34"/><ellipse cx="1914" cy="615" rx="17" ry="21"/><ellipse cx="1914" cy="655" rx="38" ry="26"/><ellipse cx="1967" cy="597" rx="18" ry="21"/><ellipse cx="1967" cy="638" rx="39" ry="27"/><ellipse cx="2015" cy="624" rx="21" ry="25"/><ellipse cx="2015" cy="672" rx="46" ry="31"/></g>
<g fill="#0b0f30" filter="url(#bl3)"><ellipse cx="-5" cy="655" rx="23" ry="27"/><ellipse cx="-5" cy="707" rx="50" ry="34"/><ellipse cx="52" cy="675" rx="23" ry="27"/><ellipse cx="52" cy="728" rx="51" ry="35"/><ellipse cx="106" cy="680" rx="29" ry="34"/><ellipse cx="106" cy="746" rx="63" ry="43"/><ellipse cx="159" cy="688" rx="32" ry="38"/><ellipse cx="159" cy="763" rx="71" ry="49"/><ellipse cx="242" cy="714" rx="30" ry="36"/><ellipse cx="242" cy="784" rx="66" ry="45"/><ellipse cx="310" cy="703" rx="23" ry="27"/><ellipse cx="310" cy="755" rx="50" ry="34"/><ellipse cx="359" cy="744" rx="30" ry="36"/><ellipse cx="359" cy="814" rx="67" ry="45"/><ellipse cx="441" cy="718" rx="30" ry="35"/><ellipse cx="441" cy="786" rx="65" ry="44"/><ellipse cx="506" cy="760" rx="26" ry="31"/><ellipse cx="506" cy="820" rx="57" ry="39"/><ellipse cx="589" cy="741" rx="29" ry="34"/><ellipse cx="589" cy="807" rx="63" ry="43"/><ellipse cx="663" cy="778" rx="31" ry="36"/><ellipse cx="663" cy="848" rx="67" ry="46"/><ellipse cx="735" cy="773" rx="33" ry="39"/><ellipse cx="735" cy="848" rx="72" ry="49"/><ellipse cx="796" cy="768" rx="32" ry="38"/><ellipse cx="796" cy="843" rx="71" ry="49"/><ellipse cx="875" cy="756" rx="31" ry="37"/><ellipse cx="875" cy="828" rx="69" ry="47"/><ellipse cx="953" cy="763" rx="29" ry="35"/><ellipse cx="953" cy="831" rx="65" ry="44"/><ellipse cx="1014" cy="764" rx="29" ry="34"/><ellipse cx="1014" cy="831" rx="64" ry="44"/><ellipse cx="1065" cy="766" rx="34" ry="40"/><ellipse cx="1065" cy="843" rx="74" ry="50"/><ellipse cx="1144" cy="770" rx="27" ry="32"/><ellipse cx="1144" cy="832" rx="59" ry="40"/><ellipse cx="1218" cy="764" rx="27" ry="32"/><ellipse cx="1218" cy="826" rx="60" ry="41"/><ellipse cx="1296" cy="742" rx="31" ry="36"/><ellipse cx="1296" cy="813" rx="68" ry="46"/><ellipse cx="1345" cy="764" rx="28" ry="33"/><ellipse cx="1345" cy="828" rx="61" ry="42"/><ellipse cx="1401" cy="769" rx="28" ry="33"/><ellipse cx="1401" cy="833" rx="62" ry="42"/><ellipse cx="1470" cy="769" rx="25" ry="30"/><ellipse cx="1470" cy="827" rx="56" ry="38"/><ellipse cx="1519" cy="734" rx="30" ry="35"/><ellipse cx="1519" cy="803" rx="66" ry="45"/><ellipse cx="1574" cy="719" rx="33" ry="38"/><ellipse cx="1574" cy="794" rx="72" ry="49"/><ellipse cx="1645" cy="720" rx="32" ry="38"/><ellipse cx="1645" cy="794" rx="71" ry="49"/><ellipse cx="1705" cy="720" rx="25" ry="29"/><ellipse cx="1705" cy="777" rx="54" ry="37"/><ellipse cx="1768" cy="716" rx="33" ry="39"/><ellipse cx="1768" cy="791" rx="72" ry="49"/><ellipse cx="1847" cy="685" rx="29" ry="34"/><ellipse cx="1847" cy="752" rx="64" ry="43"/><ellipse cx="1906" cy="665" rx="28" ry="33"/><ellipse cx="1906" cy="729" rx="62" ry="42"/><ellipse cx="1983" cy="684" rx="30" ry="36"/><ellipse cx="1983" cy="753" rx="67" ry="46"/></g>
<g fill="#090c28" filter="url(#bl3)"><ellipse cx="-65" cy="714" rx="37" ry="44"/><ellipse cx="-65" cy="800" rx="82" ry="56"/><ellipse cx="13" cy="737" rx="40" ry="47"/><ellipse cx="13" cy="829" rx="88" ry="60"/><ellipse cx="96" cy="769" rx="45" ry="53"/><ellipse cx="96" cy="873" rx="100" ry="68"/><ellipse cx="167" cy="745" rx="44" ry="52"/><ellipse cx="167" cy="845" rx="96" ry="66"/><ellipse cx="270" cy="785" rx="35" ry="41"/><ellipse cx="270" cy="866" rx="77" ry="53"/><ellipse cx="338" cy="777" rx="37" ry="44"/><ellipse cx="338" cy="863" rx="82" ry="56"/><ellipse cx="447" cy="799" rx="33" ry="38"/><ellipse cx="447" cy="874" rx="72" ry="49"/><ellipse cx="546" cy="824" rx="40" ry="47"/><ellipse cx="546" cy="916" rx="88" ry="60"/><ellipse cx="653" cy="850" rx="41" ry="48"/><ellipse cx="653" cy="944" rx="90" ry="61"/><ellipse cx="744" cy="816" rx="31" ry="36"/><ellipse cx="744" cy="886" rx="67" ry="46"/><ellipse cx="847" cy="816" rx="35" ry="41"/><ellipse cx="847" cy="895" rx="76" ry="52"/><ellipse cx="949" cy="831" rx="40" ry="47"/><ellipse cx="949" cy="922" rx="87" ry="60"/><ellipse cx="1036" cy="843" rx="44" ry="52"/><ellipse cx="1036" cy="944" rx="97" ry="66"/><ellipse cx="1150" cy="840" rx="32" ry="38"/><ellipse cx="1150" cy="914" rx="71" ry="49"/><ellipse cx="1248" cy="848" rx="36" ry="43"/><ellipse cx="1248" cy="931" rx="79" ry="54"/><ellipse cx="1359" cy="843" rx="45" ry="53"/><ellipse cx="1359" cy="946" rx="98" ry="67"/><ellipse cx="1459" cy="809" rx="41" ry="49"/><ellipse cx="1459" cy="904" rx="91" ry="62"/><ellipse cx="1558" cy="816" rx="34" ry="40"/><ellipse cx="1558" cy="893" rx="74" ry="50"/><ellipse cx="1674" cy="809" rx="39" ry="46"/><ellipse cx="1674" cy="897" rx="85" ry="58"/><ellipse cx="1757" cy="792" rx="43" ry="51"/><ellipse cx="1757" cy="892" rx="95" ry="65"/><ellipse cx="1829" cy="760" rx="39" ry="46"/><ellipse cx="1829" cy="850" rx="85" ry="58"/><ellipse cx="1921" cy="728" rx="43" ry="50"/><ellipse cx="1921" cy="826" rx="94" ry="64"/><ellipse cx="2028" cy="717" rx="35" ry="42"/><ellipse cx="2028" cy="798" rx="78" ry="53"/></g>
<g fill="#070a1e" filter="url(#bl3)"><ellipse cx="-104" cy="813" rx="57" ry="67"/><ellipse cx="-104" cy="943" rx="125" ry="85"/><ellipse cx="34" cy="854" rx="52" ry="61"/><ellipse cx="34" cy="973" rx="114" ry="78"/><ellipse cx="131" cy="838" rx="53" ry="62"/><ellipse cx="131" cy="958" rx="116" ry="79"/><ellipse cx="272" cy="878" rx="52" ry="62"/><ellipse cx="272" cy="999" rx="115" ry="79"/><ellipse cx="401" cy="885" rx="50" ry="58"/><ellipse cx="401" cy="999" rx="109" ry="74"/><ellipse cx="553" cy="904" rx="59" ry="70"/><ellipse cx="553" cy="1041" rx="130" ry="89"/><ellipse cx="679" cy="923" rx="46" ry="54"/><ellipse cx="679" cy="1029" rx="101" ry="69"/><ellipse cx="805" cy="925" rx="42" ry="50"/><ellipse cx="805" cy="1022" rx="93" ry="63"/><ellipse cx="931" cy="916" rx="58" ry="69"/><ellipse cx="931" cy="1050" rx="128" ry="87"/><ellipse cx="1055" cy="928" rx="43" ry="51"/><ellipse cx="1055" cy="1027" rx="95" ry="64"/><ellipse cx="1174" cy="940" rx="61" ry="72"/><ellipse cx="1174" cy="1080" rx="134" ry="91"/><ellipse cx="1298" cy="904" rx="51" ry="60"/><ellipse cx="1298" cy="1020" rx="111" ry="76"/><ellipse cx="1450" cy="913" rx="48" ry="57"/><ellipse cx="1450" cy="1023" rx="106" ry="72"/><ellipse cx="1582" cy="911" rx="44" ry="52"/><ellipse cx="1582" cy="1013" rx="97" ry="66"/><ellipse cx="1676" cy="864" rx="46" ry="55"/><ellipse cx="1676" cy="971" rx="102" ry="69"/><ellipse cx="1789" cy="853" rx="54" ry="64"/><ellipse cx="1789" cy="978" rx="120" ry="82"/><ellipse cx="1929" cy="820" rx="52" ry="62"/><ellipse cx="1929" cy="940" rx="115" ry="78"/><ellipse cx="2034" cy="822" rx="51" ry="60"/><ellipse cx="2034" cy="938" rx="112" ry="76"/></g>
<g fill="#040612" filter="url(#bl3)"><ellipse cx="-78" cy="901" rx="62" ry="73"/><ellipse cx="-78" cy="1043" rx="136" ry="93"/><ellipse cx="104" cy="947" rx="80" ry="94"/><ellipse cx="104" cy="1130" rx="176" ry="120"/><ellipse cx="306" cy="966" rx="77" ry="91"/><ellipse cx="306" cy="1142" rx="169" ry="115"/><ellipse cx="511" cy="1002" rx="65" ry="76"/><ellipse cx="511" cy="1152" rx="143" ry="97"/><ellipse cx="655" cy="1042" rx="81" ry="95"/><ellipse cx="655" cy="1228" rx="178" ry="121"/><ellipse cx="800" cy="1030" rx="63" ry="75"/><ellipse cx="800" cy="1175" rx="139" ry="95"/><ellipse cx="999" cy="1017" rx="78" ry="92"/><ellipse cx="999" cy="1196" rx="172" ry="117"/><ellipse cx="1160" cy="1028" rx="56" ry="67"/><ellipse cx="1160" cy="1158" rx="124" ry="85"/><ellipse cx="1345" cy="1038" rx="83" ry="98"/><ellipse cx="1345" cy="1229" rx="183" ry="125"/><ellipse cx="1515" cy="1015" rx="70" ry="83"/><ellipse cx="1515" cy="1176" rx="154" ry="105"/><ellipse cx="1656" cy="962" rx="59" ry="70"/><ellipse cx="1656" cy="1097" rx="130" ry="88"/><ellipse cx="1830" cy="953" rx="72" ry="85"/><ellipse cx="1830" cy="1119" rx="158" ry="108"/><ellipse cx="1970" cy="917" rx="80" ry="94"/><ellipse cx="1970" cy="1100" rx="175" ry="119"/></g>
<g fill="#010204" filter="url(#bl3)"><ellipse cx="-195" cy="978" rx="106" ry="125"/><ellipse cx="-195" cy="1223" rx="234" ry="159"/><ellipse cx="57" cy="1030" rx="89" ry="105"/><ellipse cx="57" cy="1235" rx="195" ry="133"/><ellipse cx="269" cy="1076" rx="72" ry="86"/><ellipse cx="269" cy="1243" rx="159" ry="109"/><ellipse cx="530" cy="1100" rx="88" ry="104"/><ellipse cx="530" cy="1303" rx="194" ry="133"/><ellipse cx="740" cy="1107" rx="78" ry="92"/><ellipse cx="740" cy="1286" rx="171" ry="117"/><ellipse cx="903" cy="1137" rx="101" ry="119"/><ellipse cx="903" cy="1369" rx="222" ry="151"/><ellipse cx="1166" cy="1126" rx="87" ry="102"/><ellipse cx="1166" cy="1325" rx="190" ry="130"/><ellipse cx="1387" cy="1141" rx="101" ry="119"/><ellipse cx="1387" cy="1373" rx="222" ry="151"/><ellipse cx="1656" cy="1091" rx="100" ry="118"/><ellipse cx="1656" cy="1321" rx="220" ry="150"/><ellipse cx="1865" cy="1065" rx="104" ry="122"/><ellipse cx="1865" cy="1303" rx="228" ry="156"/><ellipse cx="2117" cy="1019" rx="87" ry="102"/><ellipse cx="2117" cy="1218" rx="191" ry="130"/></g>
<path d="M-93 691Q-65 653 -37 691M134 718Q167 674 201 718M310 754Q338 716 367 754M422 779Q447 746 472 779M622 825Q653 784 684 825M821 795Q847 760 873 795M1002 816Q1036 771 1069 816M1724 766Q1757 722 1790 766M1888 701Q1921 658 1953 701M91 805Q131 752 171 805M1128 903Q1174 841 1221 903M1413 883Q1450 834 1486 883M1747 819Q1789 765 1830 819M1889 788Q1929 736 1969 788M1995 790Q2034 739 2072 790M593 992Q655 911 716 992M752 991Q800 927 848 991M940 968Q999 890 1059 968M1117 993Q1160 936 1203 993M1282 987Q1345 903 1409 987M1611 925Q1656 866 1701 925M1775 909Q1830 837 1884 909M1310 1079Q1387 977 1463 1079" stroke="#1f4aa8" stroke-width="4" fill="none" opacity=".35" filter="url(#bl3)"/>
<g filter="url(#bl1)"><path d="M631 750L651 650L659 650L649 750ZM691 750L723 638L731 638L709 750ZM736 750L766 642L774 642L754 750ZM791 750L794 688L802 688L809 750ZM851 750L865 629L873 629L869 750ZM896 750L878 631L886 631L914 750ZM941 750L931 660L939 660L959 750ZM1001 750L1010 655L1018 655L1019 750ZM1041 750L1029 689L1037 689L1059 750ZM1091 750L1121 672L1129 672L1109 750ZM1131 750L1116 640L1124 640L1149 750ZM1181 750L1164 638L1172 638L1199 750ZM1231 750L1214 650L1222 650L1249 750ZM1281 750L1308 690L1316 690L1299 750ZM1341 750L1329 676L1337 676L1359 750Z" fill="#0c1034"/><path d="M655 652l-6 -14M655 652l-1 -15M655 652l4 -14M655 652l9 -12M727 640l-5 -14M727 640l1 -15M727 640l6 -14M727 640l10 -11M770 644l-5 -14M770 644l0 -15M770 644l6 -14M770 644l10 -11M798 690l-8 -13M798 690l-3 -15M798 690l2 -15M798 690l7 -13M869 631l-7 -13M869 631l-2 -15M869 631l3 -15M869 631l8 -13M882 633l-10 -11M882 633l-6 -14M882 633l-1 -15M882 633l5 -14M935 662l-10 -11M935 662l-5 -14M935 662l-0 -15M935 662l5 -14M1014 657l-7 -13M1014 657l-2 -15M1014 657l3 -15M1014 657l8 -13M1033 691l-11 -10M1033 691l-7 -13M1033 691l-2 -15M1033 691l3 -15M1125 674l-4 -15M1125 674l2 -15M1125 674l7 -13M1125 674l11 -10M1120 642l-10 -11M1120 642l-6 -14M1120 642l-1 -15M1120 642l5 -14M1168 640l-10 -11M1168 640l-6 -14M1168 640l-1 -15M1168 640l5 -14M1218 652l-10 -11M1218 652l-6 -14M1218 652l-1 -15M1218 652l4 -14M1312 692l-3 -15M1312 692l2 -15M1312 692l7 -13M1312 692l11 -10M1333 678l-11 -11M1333 678l-6 -14M1333 678l-1 -15M1333 678l4 -14" stroke="#0c1034" stroke-width="3.500" stroke-linecap="round" fill="none"/></g>
</symbol></svg>
<div id="win">
  <div id="tabbtn"></div>
  <svg style="left:46px;top:52px" width="26" height="18" viewBox="0 0 26 18"><path d="M2.5 3.5L13 13.5 23.5 3.5" fill="none" stroke="#2e3136" stroke-width="5"/></svg>
  <div class="chip" style="left:118px;width:133px;background:#643298;color:#b7aec4;letter-spacing:1.300px;text-indent:1px">Muzik</div>
  <div class="chip" style="left:281px;width:167px;background:#91691b;color:#252525;letter-spacing:1px;text-indent:1px">Sekolah</div>
  <div class="chip" style="left:478px;width:134px;background:#1f4f96;color:#afbdd6;letter-spacing:.500px">Sosial</div>
  <div class="ul" style="left:124px;width:121px;background:#643298"></div>
  <div class="ul" style="left:287px;width:155px;background:#91691b"></div>
  <div class="ul" style="left:484px;width:122px;background:#1f4f96"></div>
  <div id="toolbar"></div>
  <svg id="tab" viewBox="0 0 690 100"><path d="M1 100C13 100 21.500 92 21.500 80V22C21.500 10 30 0 43 0H648C661 0 670 10 670 22V80C670 92 678 100 690 100V102H1Z" fill="#929394"/></svg>
  <svg style="left:679px;top:44px" width="42" height="30" viewBox="0 0 42 30"><rect width="42" height="30" rx="8" fill="#9b1216"/><path d="M16.5 8.5L28 15 16.5 21.5Z" fill="#9a9a9c"/></svg>
  <div id="tabtitle">YouTube</div>
  <svg style="left:1243px;top:48px" width="23" height="23" viewBox="0 0 23 23"><path d="M2 2L21 21M21 2L2 21" stroke="#232528" stroke-width="4.2" fill="none"/></svg>
  <svg style="left:1352px;top:45px" width="28" height="28" viewBox="0 0 28 28"><path d="M14 0V28M0 14H28" stroke="#2e3034" stroke-width="4.2" fill="none"/></svg>
  <svg style="left:2529px;top:55px" width="36" height="8"><rect width="36" height="7" fill="#1c4e9c"/></svg>
  <svg style="left:2648px;top:40px" width="38" height="38"><rect x="3" y="3" width="32" height="32" fill="none" stroke="#1c4e9c" stroke-width="6"/></svg>
  <svg style="left:2765px;top:41px" width="36" height="36" viewBox="0 0 36 36"><path d="M2 2L34 34M34 2L2 34" stroke="#1c4e9c" stroke-width="6" fill="none"/></svg>
  <!-- toolbar icons -->
  <svg style="left:37px;top:157px" width="34" height="34" viewBox="0 0 34 34"><path d="M33 17H3M17 2L2 17 17 32" fill="none" stroke="#3a3b3e" stroke-width="3.2"/></svg>
  <svg style="left:125px;top:157px" width="34" height="34" viewBox="0 0 34 34"><path d="M1 17H31M17 2L32 17 17 32" fill="none" stroke="#6c6d70" stroke-width="3.2"/></svg>
  <svg style="left:213px;top:156px" width="36" height="36" viewBox="0 0 36 36"><path d="M31.5 18A14.5 14.5 0 1 1 26.5 7" fill="none" stroke="#3a3b3e" stroke-width="3.2"/><path d="M21.5 12.5H31.5V2.5" fill="none" stroke="#3a3b3e" stroke-width="3.2"/></svg>
  <div id="omni"></div>
  <div id="site"></div>
  <svg style="left:320px;top:160px" width="33" height="29" viewBox="0 0 33 29"><circle cx="6.5" cy="6.5" r="4.6" fill="none" stroke="#2b2d31" stroke-width="3"/><path d="M16 6.5H30" stroke="#2b2d31" stroke-width="3"/><path d="M2 22.5H17" stroke="#2b2d31" stroke-width="3"/><circle cx="25.5" cy="22.5" r="4.6" fill="none" stroke="#2b2d31" stroke-width="3"/></svg>
  <div id="url"><b>youtube.com</b>/watch/</div>
  <svg style="left:2418px;top:154px" width="46" height="44" viewBox="0 0 24 24"><path d="M12 3.2l2.7 5.7 6.2.8-4.6 4.3 1.2 6.2L12 17.1 6.5 20.2l1.2-6.2L3.1 9.7l6.2-.8z" fill="none" stroke="#3a3b3e" stroke-width="1.8" stroke-linejoin="miter"/></svg>
  <svg style="left:2536px;top:149px" width="48" height="48" viewBox="0 0 48 48"><path d="M8.900 10.700H34.500Q37.500 10.700 37.500 13.700V38.800Q37.500 41.800 34.500 41.800H8.900Q5.900 41.800 5.900 38.800V31.300A5.500 5.500 0 0 0 5.900 20.300V13.700Q5.900 10.700 8.900 10.700Z" fill="none" stroke="#3a3b3e" stroke-width="3.400" stroke-linejoin="round"/><path d="M17 9.800A4.800 4.800 0 0 1 26.600 9.800ZM38.800 20.800A5 5 0 0 1 38.800 30.800Z" fill="#3a3b3e"/></svg>
  <div id="avatar"><svg width="50" height="50" viewBox="0 0 50 50" style="left:0;top:0"><rect width="50" height="50" fill="#a3a4a7"/><rect x="0" y="8" width="14" height="30" fill="#9b9c9f"/><rect x="36" y="6" width="14" height="30" fill="#a9aaad"/><path d="M4 50C6 38 16 35 25 35S44 38 46 50Z" fill="#b4b5b8"/><path d="M21 30h8l1 12-5 8-5-8z" fill="#5a4036"/><ellipse cx="25" cy="22.500" rx="7.600" ry="10" fill="#62463b"/><path d="M16.500 22C15 8 35 8 33.500 22 32 14 18 14 16.500 22Z" fill="#26211f"/><ellipse cx="25" cy="11" rx="5.500" ry="4" fill="#26211f"/></svg></div>
  <div id="tbline"></div>
  <div id="page"></div>
  <!-- youtube header -->
  <svg style="left:45px;top:264px" width="32" height="26" viewBox="0 0 32 26"><path d="M0 1.5H31M0 12H31M0 22.5H31" stroke="#1b1c1f" stroke-width="2.4"/></svg>
  <svg style="left:123px;top:259px" width="160" height="38" viewBox="0 0 160 38"><rect y="1" width="48.5" height="34" rx="9" fill="#9a1115"/><path d="M19 10.5L32.5 18 19 25.500Z" fill="#9c9c9e"/><text transform="translate(53.500,32.600) scale(.590,1)" font-family="Liberation Sans,sans-serif" font-weight="bold" font-size="41.500" fill="#1d1e21" stroke="#1d1e21" stroke-width="1.500" letter-spacing="-.500">YouTube</text></svg>
  <div id="search"><span>Cari</span><div class="btn"></div></div>
  <svg style="left:1884px;top:259px" width="36" height="36" viewBox="0 0 36 36"><circle cx="16" cy="16" r="13.3" fill="none" stroke="#222326" stroke-width="2.200"/><path d="M25.500 25.500L31.500 31.500" stroke="#222326" stroke-width="2.200"/></svg>
  <div id="mic"></div>
  <svg style="left:2004px;top:261px" width="26" height="34" viewBox="0 0 26 34"><rect x="8" y="0" width="10" height="20" rx="5" fill="#222326"/><path d="M3 14c0 7 4 10 10 10s10-3 10-10M13 24v8" fill="none" stroke="#222326" stroke-width="2.2"/></svg>
  <div id="video"><svg width="1995" height="1131" style="left:0;top:0"><use href="#concert" width="1995" height="1131"/><rect width="1995" height="1131" fill="#202124" opacity=".47"/></svg></div>
  <div id="cast"><svg style="left:69px;top:40px" width="51" height="42" viewBox="0 0 51 42"><path d="M2 7.500V6a4 4 0 0 1 4-4h39a4 4 0 0 1 4 4v30a4 4 0 0 1-4 4H31" fill="none" stroke="#fff" stroke-width="4"/><path d="M0 18.500a21.500 21.500 0 0 1 21.500 21.500M0 27a13 13 0 0 1 13 13" fill="none" stroke="#fff" stroke-width="4"/><path d="M0 34.500a5.500 5.500 0 0 1 5.500 5.500H0z" fill="#fff"/></svg><span>Dimainkan pada TV Ruang Tamu</span></div>
  <div id="vtitle">Konsert langsung - Palm Springs</div>
  <!-- sidebar skeleton -->
  <div class="sk" style="left:2149px;top:598px;width:287px;height:166px"></div>
  <div class="sk" style="left:2149px;top:781px;width:287px;height:166px"></div>
  <div class="sk" style="left:2149px;top:961px;width:287px;height:166px"></div>
  <div class="sk" style="left:2149px;top:1140px;width:287px;height:170px"></div>
  <div class="sk" style="left:2149px;top:1320px;width:287px;height:165px"></div>
  <div class="sk" style="left:2149px;top:1496px;width:287px;height:166px"></div>
  <div class="sb" style="top:786px;width:287px;height:32px"></div>
  <div class="sb" style="top:823px;width:344px;height:32px"></div>
  <div class="sb" style="top:860px;width:153px;height:26px"></div>
  <div class="sb" style="top:892px;width:229px;height:26px"></div>
  <div class="sb" style="top:961px;width:287px;height:32px"></div>
  <div class="sb" style="top:998px;width:344px;height:33px"></div>
  <div class="sb" style="top:1040px;width:153px;height:26px"></div>
  <div class="sb" style="top:1074px;width:251px;height:26px"></div>
  <div class="sb" style="top:1151px;width:287px;height:33px"></div>
  <div class="sb" style="top:1188px;width:207px;height:26px"></div>
  <div class="sb" style="top:1326px;width:355px;height:32px"></div>
  <div class="sb" style="top:1363px;width:307px;height:32px"></div>
  <div class="sb" style="top:1402px;width:153px;height:25px"></div>
  <div class="sb" style="top:1432px;width:335px;height:26px"></div>
  <div class="sb" style="top:1496px;width:335px;height:33px"></div>
  <div class="sb" style="top:1534px;width:307px;height:32px"></div>
  <div class="sb" style="top:1573px;width:153px;height:26px"></div>
</div>
<div id="media"><svg style="left:21px;top:25px" width="68" height="68" viewBox="0 0 24 24"><path d="M15 6H3v2h12V6zm0 4H3v2h12v-2zM3 16h8v-2H3v2zM17 6v8.180c-.31-.11-.65-.18-1-.18-1.660 0-3 1.340-3 3s1.340 3 3 3 3-1.340 3-3V8h3V6h-5z" fill="#0b0b0c"/></svg></div>
<div id="pop">
  <div id="pdark"><svg style="left:335.400px;top:-20.300px" width="568" height="320.500" viewBox="0 0 568 320.500"><defs><linearGradient id="fade" x1="0" y1="0" x2="1" y2="0"><stop offset="0" stop-color="#05070f"/><stop offset=".17" stop-color="#05070f"/><stop offset=".2" stop-color="#05070f" stop-opacity="0"/></linearGradient></defs><use href="#concert" width="568" height="320.500"/><rect width="568" height="320.500" fill="url(#fade)"/></svg></div>
  <div class="pb" style="top:39px;width:57px"></div>
  <div class="pb" style="top:88px;width:257px"></div>
  <div class="pb" style="top:116px;width:134px;height:17px"></div>
  <svg style="left:48px;top:191px" width="40" height="25" viewBox="0 0 40 25"><path d="M18 2.500V22.500L1.500 12.500ZM38.500 2.500V22.500L22 12.500Z" fill="#caccfa" stroke="#caccfa" stroke-width="3" stroke-linejoin="round"/></svg>
  <svg style="left:136px;top:189px" width="27" height="30" viewBox="0 0 27 30"><path d="M2.500 2.500V27.500L24.500 15Z" fill="#caccfa" stroke="#caccfa" stroke-width="3.5" stroke-linejoin="round"/></svg>
  <svg style="left:206px;top:191px" width="40" height="25" viewBox="0 0 40 25"><path d="M1.500 2.500V22.500L18 12.500ZM22 2.500V22.500L38.500 12.500Z" fill="#caccfa" stroke="#caccfa" stroke-width="3" stroke-linejoin="round"/></svg>
  <svg style="left:276px;top:178px" width="4" height="51"><rect width="3.800" height="51" rx="1.900" fill="#caccfa"/></svg>
  <svg style="left:306px;top:181px" width="48" height="39" viewBox="0 0 48 39"><path d="M22 3.500H44.500V25M3.500 24V35.500H24" fill="none" stroke="#caccfa" stroke-width="3.500"/><rect x="27.500" y="26" width="19.500" height="12" fill="#caccfa"/><path d="M2 2.500L15.500 15.500M2 15.800H15.800V3" fill="none" stroke="#caccfa" stroke-width="3.500"/></svg>
  <svg style="left:47px;top:298px" width="46" height="38" viewBox="0 0 46 38"><rect x="2" y="2" width="42" height="33" rx="3" fill="none" stroke="#0b0b0c" stroke-width="4"/><path d="M9 17.500H12.500M15.500 17.500H36M9 24.700H29.500M32.500 24.700H36" stroke="#0b0b0c" stroke-width="3.200"/></svg>
  <div class="row" style="top:295px">Sari Kata Langsung</div>
  <svg style="left:706px;top:304px" width="50" height="28" viewBox="0 0 50 28"><rect x="2.500" y="2.500" width="44.500" height="22.500" rx="11.250" fill="none" stroke="#0b0b0c" stroke-width="5"/><circle cx="14" cy="13.700" r="6.800" fill="#0b0b0c"/></svg>
  <div id="pdiv"></div>
  <svg style="left:47px;top:397px" width="46" height="46" viewBox="0 0 46 46"><path d="M19.7 8.4L19.7 2.3L26.3 2.3L26.3 8.4L34.0 12.8L39.3 9.8L42.6 15.5L37.3 18.5L37.3 27.5L42.6 30.5L39.3 36.2L34.0 33.2L26.3 37.6L26.3 43.7L19.7 43.7L19.7 37.6L12.0 33.2L6.7 36.2L3.4 30.5L8.7 27.5L8.7 18.5L3.4 15.5L6.7 9.8L12.0 12.8Z" fill="none" stroke="#0b0b0c" stroke-width="3.600" stroke-linejoin="miter"/><circle cx="23" cy="23" r="7.400" fill="#0b0b0c"/></svg>
  <div class="row" style="top:398px">Tetapan sari kata</div>
  <svg style="left:726px;top:400.500px" width="41" height="41" viewBox="0 0 42 42"><path d="M19 2H2V40H40V22M24 2H40V18M40 2L14.500 27.500" fill="none" stroke="#0b0b0c" stroke-width="3.700"/></svg>
</div>
</body></html>
